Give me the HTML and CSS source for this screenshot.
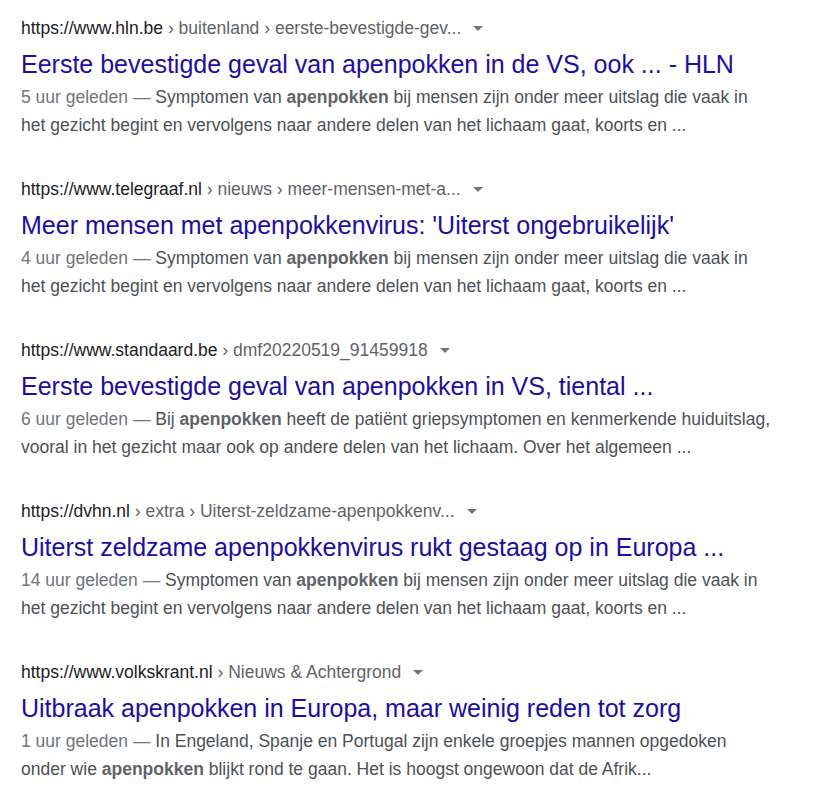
FILE: index.html
```html
<!DOCTYPE html>
<html lang="nl">
<head>
<meta charset="utf-8">
<link rel="stylesheet" href="styles.css">
</head>
<body>
<div class="results">
  <div class="result">
    <div class="cite"><span class="host">https://www.hln.be</span><span class="path"> › buitenland › eerste-bevestigde-gev...</span><span class="arrow"></span></div>
    <h3 class="title">Eerste bevestigde geval van apenpokken in de VS, ook ... - HLN</h3>
    <div class="snippet"><span class="date">5 uur geleden — </span>Symptomen van <b>apenpokken</b> bij mensen zijn onder meer uitslag die vaak in<br>het gezicht begint en vervolgens naar andere delen van het lichaam gaat, koorts en ...</div>
  </div>
  <div class="result">
    <div class="cite"><span class="host">https://www.telegraaf.nl</span><span class="path"> › nieuws › meer-mensen-met-a...</span><span class="arrow"></span></div>
    <h3 class="title">Meer mensen met apenpokkenvirus: 'Uiterst ongebruikelijk'</h3>
    <div class="snippet"><span class="date">4 uur geleden — </span>Symptomen van <b>apenpokken</b> bij mensen zijn onder meer uitslag die vaak in<br>het gezicht begint en vervolgens naar andere delen van het lichaam gaat, koorts en ...</div>
  </div>
  <div class="result">
    <div class="cite"><span class="host">https://www.standaard.be</span><span class="path"> › dmf20220519_91459918</span><span class="arrow"></span></div>
    <h3 class="title">Eerste bevestigde geval van apenpokken in VS, tiental ...</h3>
    <div class="snippet"><span class="date">6 uur geleden — </span>Bij <b>apenpokken</b> heeft de patiënt griepsymptomen en kenmerkende huiduitslag,<br>vooral in het gezicht maar ook op andere delen van het lichaam. Over het algemeen ...</div>
  </div>
  <div class="result">
    <div class="cite"><span class="host">https://dvhn.nl</span><span class="path"> › extra › Uiterst-zeldzame-apenpokkenv...</span><span class="arrow"></span></div>
    <h3 class="title">Uiterst zeldzame apenpokkenvirus rukt gestaag op in Europa ...</h3>
    <div class="snippet"><span class="date">14 uur geleden — </span>Symptomen van <b>apenpokken</b> bij mensen zijn onder meer uitslag die vaak in<br>het gezicht begint en vervolgens naar andere delen van het lichaam gaat, koorts en ...</div>
  </div>
  <div class="result">
    <div class="cite"><span class="host">https://www.volkskrant.nl</span><span class="path"> › Nieuws &amp; Achtergrond</span><span class="arrow"></span></div>
    <h3 class="title">Uitbraak apenpokken in Europa, maar weinig reden tot zorg</h3>
    <div class="snippet"><span class="date">1 uur geleden — </span>In Engeland, Spanje en Portugal zijn enkele groepjes mannen opgedoken<br>onder wie <b>apenpokken</b> blijkt rond te gaan. Het is hoogst ongewoon dat de Afrik...</div>
  </div>
</div>
</body>
</html>
```
FILE: styles.css
```css
html, body {
  margin: 0;
  padding: 0;
  background: #ffffff;
}
body {
  font-family: "Liberation Sans", Arial, sans-serif;
}
.results {
  padding: 17px 0 0 21px;
  display: flex;
  flex-direction: column;
  gap: 39px;
}
.cite {
  font-size: 17.5px;
  line-height: 22px;
  white-space: nowrap;
  display: flex;
  align-items: center;
}
.host {
  color: #202124;
}
.path {
  color: #5f6368;
  white-space: pre;
}
.arrow {
  display: inline-block;
  width: 0;
  height: 0;
  margin-left: 12px;
  border-left: 5.5px solid transparent;
  border-right: 5.5px solid transparent;
  border-top: 5.5px solid #70757a;
}
.title {
  margin: 0;
  padding-top: 10px;
  font-size: 25px;
  line-height: 30px;
  font-weight: normal;
  color: #1a0dab;
  white-space: nowrap;
}
.snippet {
  margin-top: 4px;
  font-size: 17.5px;
  line-height: 28px;
  color: #4d5156;
  white-space: nowrap;
}
.snippet b {
  color: #5f6368;
}
.date {
  color: #70757a;
}
```
